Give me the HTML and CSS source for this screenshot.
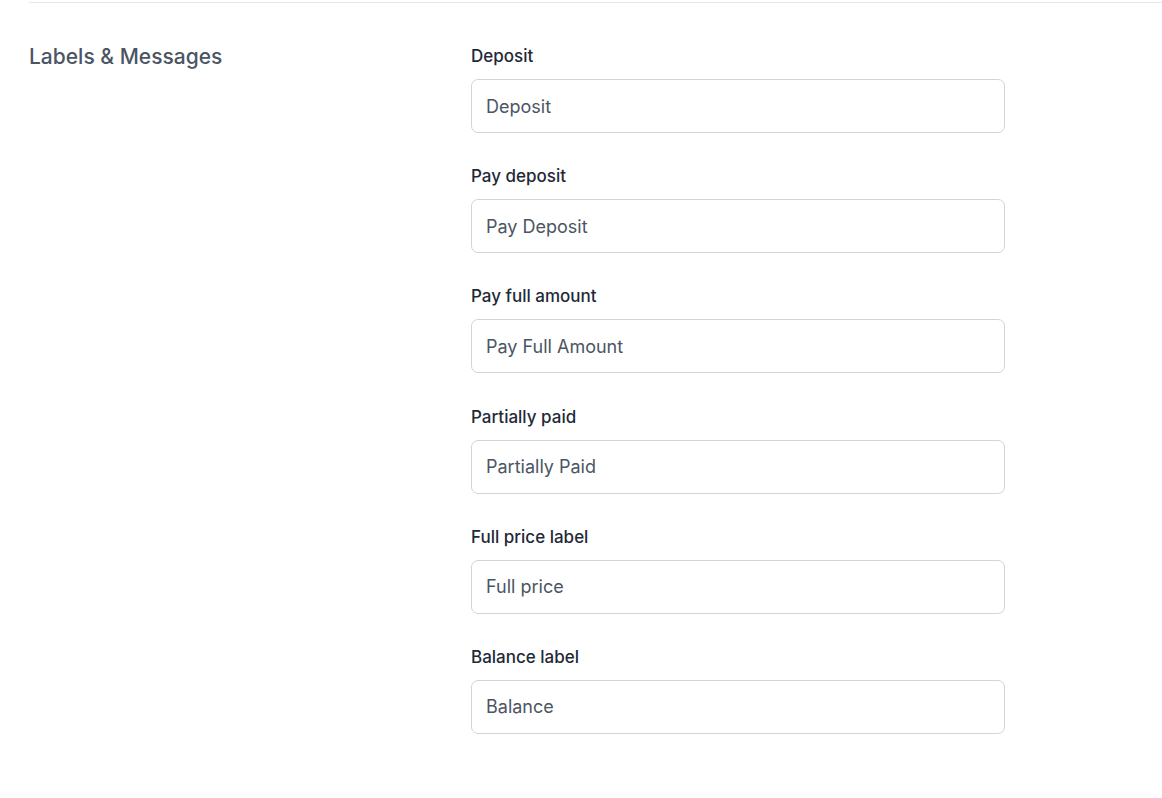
FILE: index.html
```html
<!DOCTYPE html>
<html>
<head>
<meta charset="utf-8">
<link rel="stylesheet" href="styles.css">
</head>
<body>
<section class="section">
  <div class="side">
    <h2 class="title">Labels &amp; Messages</h2>
  </div>
  <div class="fields">
    <div class="field">
      <label class="label">Deposit</label>
      <input class="input" type="text" value="Deposit">
    </div>
    <div class="field">
      <label class="label">Pay deposit</label>
      <input class="input" type="text" value="Pay Deposit">
    </div>
    <div class="field">
      <label class="label">Pay full amount</label>
      <input class="input" type="text" value="Pay Full Amount">
    </div>
    <div class="field">
      <label class="label">Partially paid</label>
      <input class="input" type="text" value="Partially Paid">
    </div>
    <div class="field">
      <label class="label">Full price label</label>
      <input class="input" type="text" value="Full price">
    </div>
    <div class="field">
      <label class="label">Balance label</label>
      <input class="input" type="text" value="Balance">
    </div>
  </div>
</section>
</body>
</html>
```

FILE: styles.css
```css
html, body {
  margin: 0;
  padding: 0;
  background: #ffffff;
}
body {
  font-family: Inter, "Noto Sans", sans-serif;
  padding-left: 29px;
  padding-top: 2px;
}
.section {
  display: flex;
  border-top: 1px solid #e5e7eb;
  padding-top: 41px;
}
.side {
  width: 442px;
  flex: none;
}
.title {
  margin: 0;
  font-size: 21px;
  line-height: 25px;
  font-weight: 500;
  color: #4b5563;
}
.fields {
  width: 534px;
  display: flex;
  flex-direction: column;
  gap: 31.2px;
}
.field {
  display: flex;
  flex-direction: column;
}
.label {
  font-size: 17px;
  line-height: 25px;
  font-weight: 500;
  color: #1f2937;
  margin-bottom: 10px;
}
.input {
  box-sizing: border-box;
  height: 54px;
  width: 100%;
  border: 1px solid #d1d5db;
  border-radius: 7px;
  padding: 0 14px;
  font-family: Inter, "Noto Sans", sans-serif;
  font-size: 18px;
  color: #4b5563;
  background: #ffffff;
  outline: none;
}
```
